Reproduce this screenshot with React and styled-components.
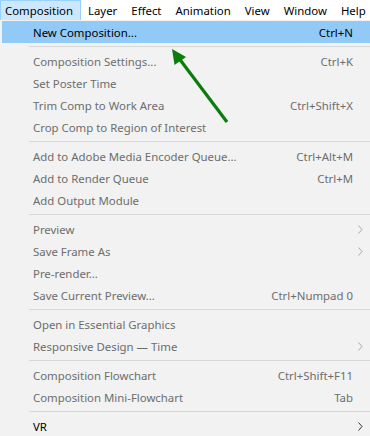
import React from 'react';
import styled, { createGlobalStyle } from 'styled-components';

const GlobalStyle = createGlobalStyle`
    html, body {
        margin: 0;
        padding: 0;
        background: #f2f2f2;
    }
    body {
        font-family: "Noto Sans", "Open Sans", sans-serif;
        font-size: 11.4px;
    }
`

const menuBarItems = ['Composition', 'Layer', 'Effect', 'Animation', 'View', 'Window', 'Help'];

const menuItems = [
    { label: 'New Composition...', shortcut: 'Ctrl+N', active: true, enabled: true },
    { sep: true },
    { label: 'Composition Settings...', shortcut: 'Ctrl+K' },
    { label: 'Set Poster Time' },
    { label: 'Trim Comp to Work Area', shortcut: 'Ctrl+Shift+X' },
    { label: 'Crop Comp to Region of Interest' },
    { sep: true },
    { label: 'Add to Adobe Media Encoder Queue...', shortcut: 'Ctrl+Alt+M' },
    { label: 'Add to Render Queue', shortcut: 'Ctrl+M' },
    { label: 'Add Output Module' },
    { sep: true },
    { label: 'Preview', submenu: true },
    { label: 'Save Frame As', submenu: true },
    { label: 'Pre-render...' },
    { label: 'Save Current Preview...', shortcut: 'Ctrl+Numpad 0' },
    { sep: true },
    { label: 'Open in Essential Graphics' },
    { label: 'Responsive Design \u2014 Time', submenu: true },
    { sep: true },
    { label: 'Composition Flowchart', shortcut: 'Ctrl+Shift+F11' },
    { label: 'Composition Mini-Flowchart', shortcut: 'Tab' },
    { sep: true },
    { label: 'VR', submenu: true, enabled: true },
];

const App = () => {
    return (
        <Screen>
            <GlobalStyle />
            <MenuBar>
                {menuBarItems.map((name, i) => (
                    <BarItem key={name} open={i === 0}>{name}</BarItem>
                ))}
            </MenuBar>
            <Dropdown>
                {menuItems.map((item, i) => item.sep ? (
                    <Separator key={i} />
                ) : (
                    <Row key={i} active={item.active} enabled={item.enabled}>
                        <Label>{item.label}</Label>
                        {item.shortcut && <Shortcut>{item.shortcut}</Shortcut>}
                        {item.submenu && (
                            <Chevron enabled={item.enabled} viewBox="0 0 5 9">
                                <path d="M0.5 0.5 L4 4.5 L0.5 8.5" fill="none" stroke="currentColor" strokeWidth="1" />
                            </Chevron>
                        )}
                    </Row>
                ))}
            </Dropdown>
            {/* the green pointer drawn over the menu */}
            <Pointer width="370" height="436" viewBox="0 0 370 436">
                <line x1="227" y1="122" x2="178" y2="57" stroke="#0a7d0a" strokeWidth="3.2" />
                <polygon points="172,49 174.5,65 186,57" fill="#0a7d0a" />
            </Pointer>
        </Screen>
    );
}

const Screen = styled.div`
    position: relative;
    width: 370px;
    height: 436px;
    overflow: hidden;
    background: #f2f2f2;
`

const MenuBar = styled.div`
    display: flex;
    height: 20px;
    background: #ffffff;
`

const BarItem = styled.div`
    display: flex;
    align-items: center;
    height: 20px;
    box-sizing: border-box;
    padding: 0 ${p => p.open ? '7px' : '7px'} 0 ${p => p.open ? '4px' : '7px'};
    white-space: nowrap;
    color: #000;
    background: ${p => p.open ? '#cce8ff' : 'transparent'};
    border: 1px solid ${p => p.open ? '#99d1ff' : 'transparent'};
    border-bottom: none;
    border-left-width: ${p => p.open ? '1px' : '0'};
    border-right-width: ${p => p.open ? '1px' : '0'};
`

const Dropdown = styled.div`
    display: flex;
    flex-direction: column;
    padding: 1px 0 0 2px;
    width: 380px;
`

const Row = styled.div`
    display: flex;
    align-items: center;
    height: 22px;
    padding: 0 0 0 31px;
    position: relative;
    background: ${p => p.active ? '#91c9f7' : 'transparent'};
    color: ${p => p.enabled ? '#000' : '#6d6d6d'};
`

const Label = styled.span`
    flex: 1;
    white-space: nowrap;
`

const Shortcut = styled.span`
    white-space: nowrap;
    margin-right: 29px;
`

const Chevron = styled.svg`
    position: absolute;
    left: 356px;
    top: 7px;
    width: 5px;
    height: 9px;
    color: ${p => p.enabled ? '#333' : '#a8a8a8'};
`

const Separator = styled.div`
    height: 1px;
    margin: 3px 0 3px 27px;
    background: #d7d7d7;
`

const Pointer = styled.svg`
    position: absolute;
    left: 0;
    top: 0;
    pointer-events: none;
`

export default App;
